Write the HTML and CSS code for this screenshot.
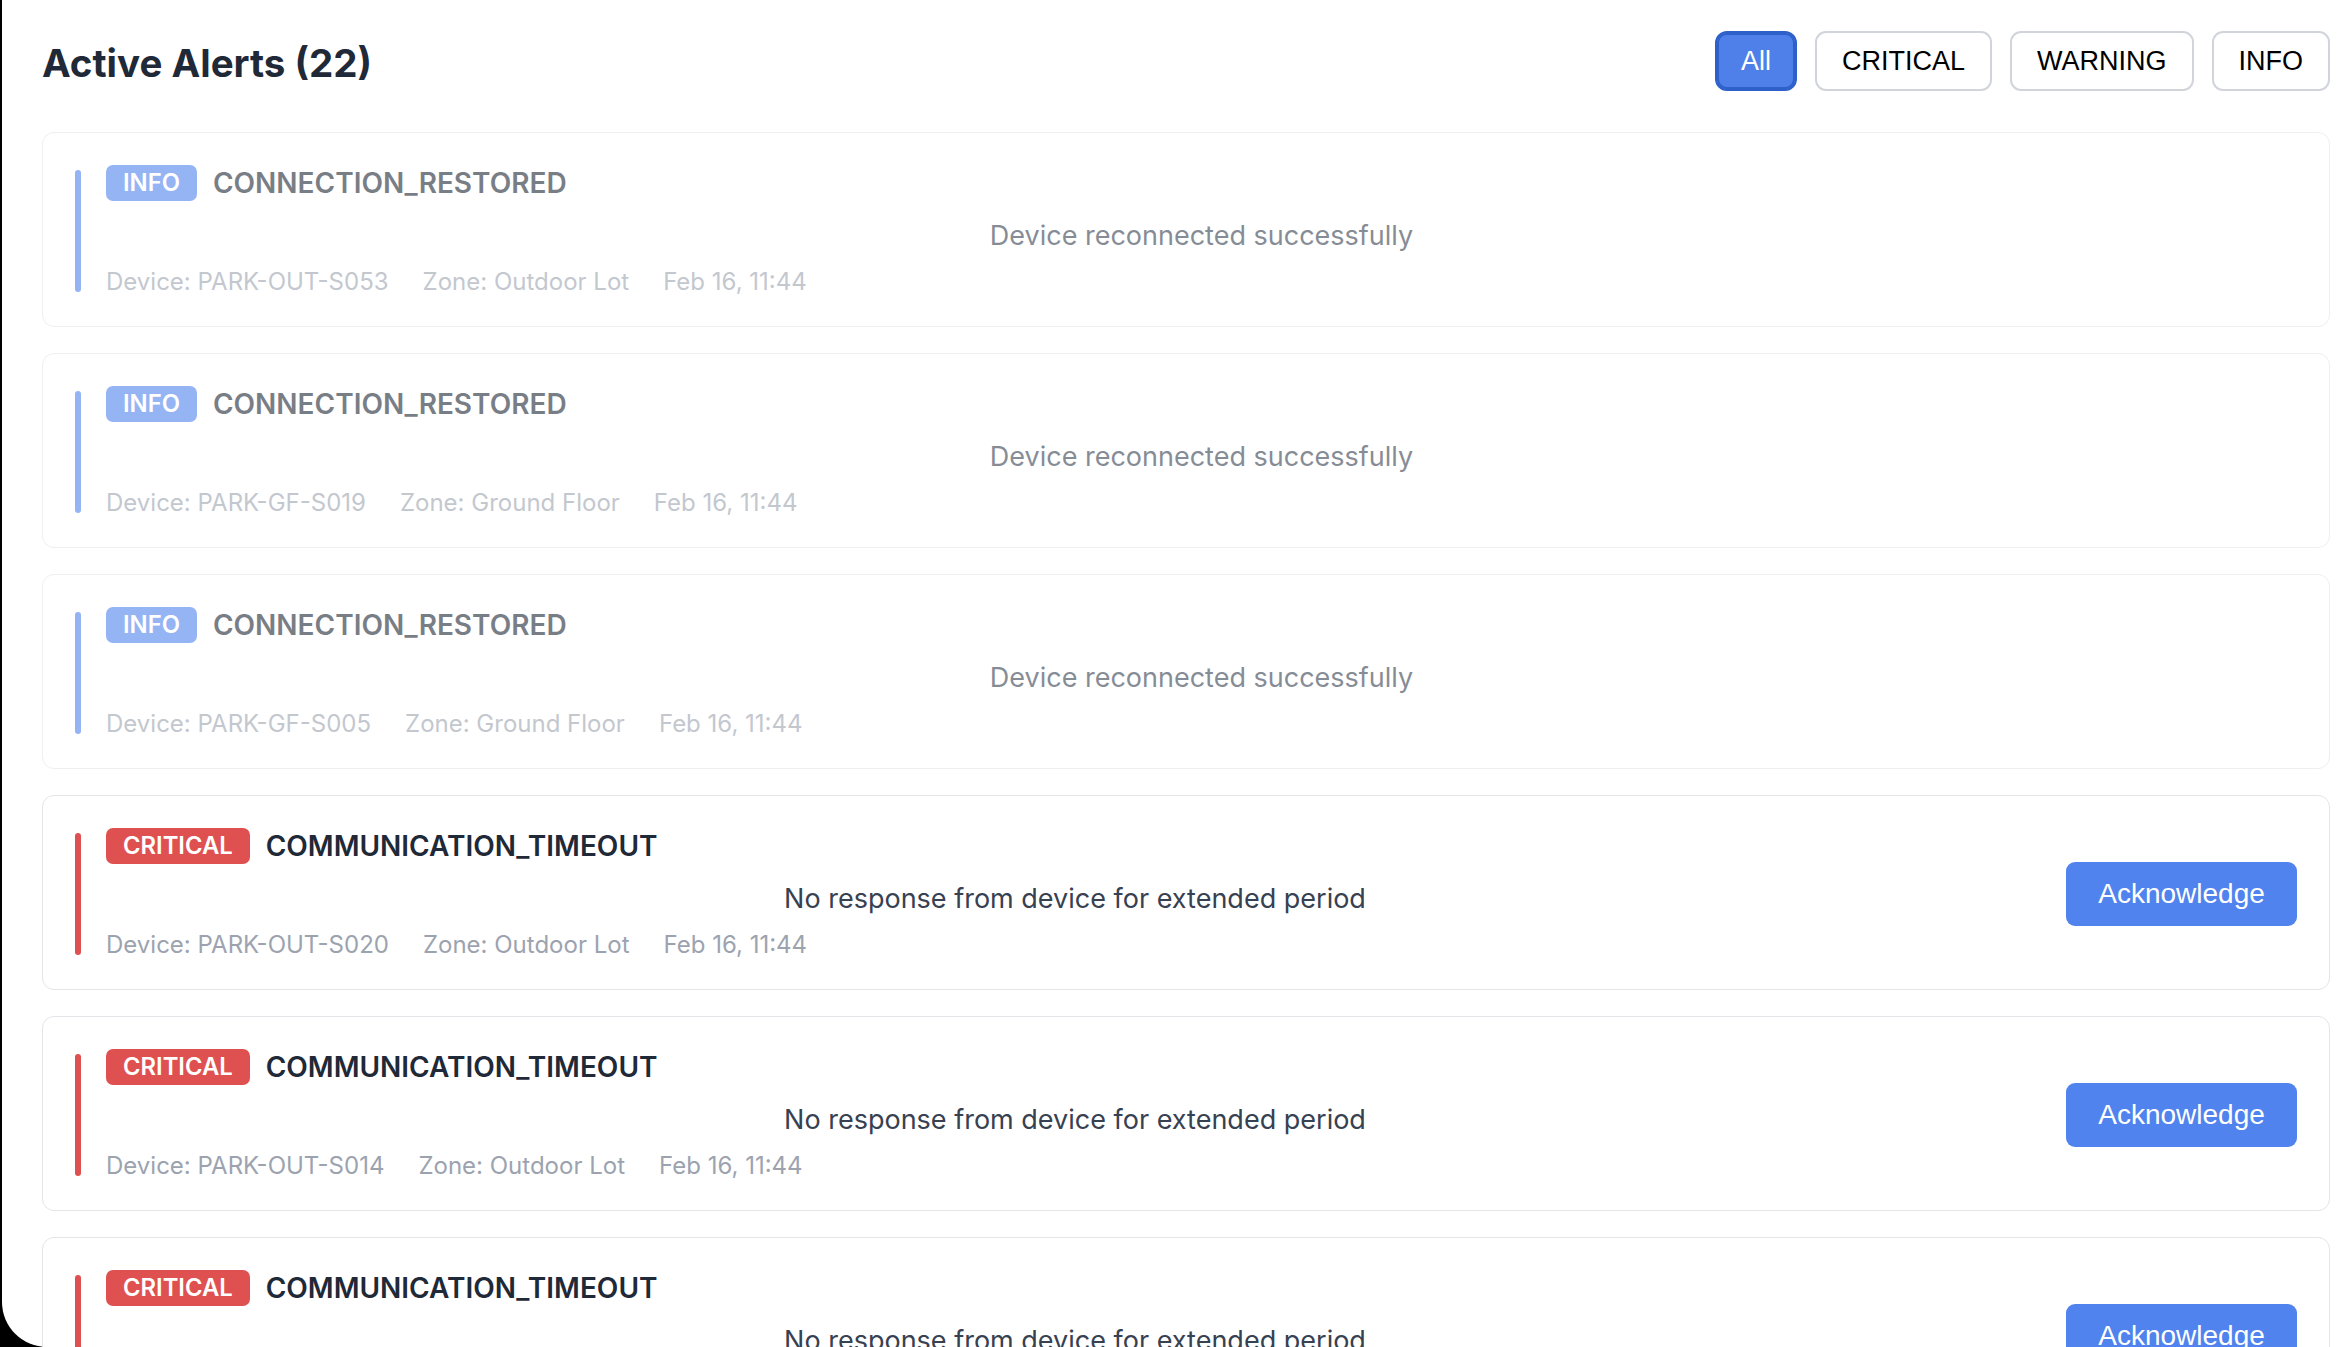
FILE: index.html
```html
<!DOCTYPE html>
<html lang="en">
<head>
<meta charset="utf-8">
<title>Active Alerts</title>
<link rel="stylesheet" href="styles.css">
</head>
<body>
<div class="window">
  <main class="alerts">
    <header class="alerts-header">
      <h1 class="alerts-title">Active Alerts (22)</h1>
      <div class="filters">
        <button class="filter filter-active">All</button>
        <button class="filter">CRITICAL</button>
        <button class="filter">WARNING</button>
        <button class="filter">INFO</button>
      </div>
    </header>

    <section class="alert-list">
      <article class="alert alert-info alert-muted">
        <div class="alert-bar"></div>
        <div class="alert-body">
          <div class="alert-head"><span class="badge badge-info">INFO</span><span class="alert-type">CONNECTION_RESTORED</span></div>
          <p class="alert-msg">Device reconnected successfully</p>
          <div class="alert-meta"><span>Device: PARK-OUT-S053</span><span>Zone: Outdoor Lot</span><span>Feb 16, 11:44</span></div>
        </div>
      </article>

      <article class="alert alert-info alert-muted">
        <div class="alert-bar"></div>
        <div class="alert-body">
          <div class="alert-head"><span class="badge badge-info">INFO</span><span class="alert-type">CONNECTION_RESTORED</span></div>
          <p class="alert-msg">Device reconnected successfully</p>
          <div class="alert-meta"><span>Device: PARK-GF-S019</span><span>Zone: Ground Floor</span><span>Feb 16, 11:44</span></div>
        </div>
      </article>

      <article class="alert alert-info alert-muted">
        <div class="alert-bar"></div>
        <div class="alert-body">
          <div class="alert-head"><span class="badge badge-info">INFO</span><span class="alert-type">CONNECTION_RESTORED</span></div>
          <p class="alert-msg">Device reconnected successfully</p>
          <div class="alert-meta"><span>Device: PARK-GF-S005</span><span>Zone: Ground Floor</span><span>Feb 16, 11:44</span></div>
        </div>
      </article>

      <article class="alert alert-critical">
        <div class="alert-bar"></div>
        <div class="alert-body">
          <div class="alert-head"><span class="badge badge-critical">CRITICAL</span><span class="alert-type">COMMUNICATION_TIMEOUT</span></div>
          <p class="alert-msg">No response from device for extended period</p>
          <div class="alert-meta"><span>Device: PARK-OUT-S020</span><span>Zone: Outdoor Lot</span><span>Feb 16, 11:44</span></div>
        </div>
        <button class="ack">Acknowledge</button>
      </article>

      <article class="alert alert-critical">
        <div class="alert-bar"></div>
        <div class="alert-body">
          <div class="alert-head"><span class="badge badge-critical">CRITICAL</span><span class="alert-type">COMMUNICATION_TIMEOUT</span></div>
          <p class="alert-msg">No response from device for extended period</p>
          <div class="alert-meta"><span>Device: PARK-OUT-S014</span><span>Zone: Outdoor Lot</span><span>Feb 16, 11:44</span></div>
        </div>
        <button class="ack">Acknowledge</button>
      </article>

      <article class="alert alert-critical">
        <div class="alert-bar"></div>
        <div class="alert-body">
          <div class="alert-head"><span class="badge badge-critical">CRITICAL</span><span class="alert-type">COMMUNICATION_TIMEOUT</span></div>
          <p class="alert-msg">No response from device for extended period</p>
          <div class="alert-meta"><span>Device: PARK-GF-S011</span><span>Zone: Ground Floor</span><span>Feb 16, 11:44</span></div>
        </div>
        <button class="ack">Acknowledge</button>
      </article>
    </section>
  </main>
</div>
</body>
</html>
```

FILE: styles.css
```css
* { box-sizing: border-box; }

html, body {
  margin: 0;
  padding: 0;
  height: 100%;
  background: #000;
  overflow: hidden;
}

.window {
  margin-left: 2px;
  height: 1347px;
  background: #fff;
  border-bottom-left-radius: 45px;
  overflow: hidden;
  font-family: Inter, "Noto Sans", sans-serif;
}

.alerts {
  padding: 31px 22px 0 40px;
}

.alerts-header {
  display: flex;
  align-items: center;
  justify-content: space-between;
  height: 60px;
  margin-bottom: 41px;
}

.alerts-title {
  margin: 4px 0 0 0;
  font-size: 38.5px;
  font-weight: 700;
  color: #1f2937;
  line-height: 46px;
}

.filters {
  display: flex;
  gap: 18px;
}

.filter {
  height: 60px;
  padding: 0 25px;
  border: 2px solid #d1d5db;
  border-radius: 11px;
  background: #fff;
  color: #000;
  font-family: "Liberation Sans", Arial, sans-serif;
  font-size: 27px;
  line-height: 32px;
}

.filter-active {
  background: #4f80ea;
  border-color: #2d60c8;
  box-shadow: inset 0 0 0 2px #2d60c8;
  color: #fff;
  padding: 0 24px;
  border-radius: 12px;
}

.alert-list {
  display: flex;
  flex-direction: column;
  gap: 26px;
}

.alert {
  display: flex;
  align-items: center;
  height: 195px;
  border: 1px solid #e3e5e9;
  border-radius: 12px;
  background: #fff;
  padding: 32px 32px 29px 32px;
}

.alert-muted {
  opacity: 0.6;
}

.alert-bar {
  align-self: stretch;
  width: 6px;
  margin: 5px 25px 5px 0;
  border-radius: 3px;
  flex: none;
}

.alert-info .alert-bar { background: #5083ed; }
.alert-critical .alert-bar { background: #df5150; }

.alert-body {
  flex: 1;
  min-width: 0;
  align-self: flex-start;
}

.alert-head {
  display: flex;
  align-items: center;
  gap: 16px;
  height: 36px;
}

.badge {
  height: 36px;
  line-height: 36px;
  padding: 0 17px;
  border-radius: 7px;
  color: #fff;
  font-size: 23.8px;
  font-weight: 600;
}

.badge-info { background: #5083ed; }
.badge-critical { background: #df5150; }

.alert-type {
  font-size: 28px;
  font-weight: 600;
  color: #1f2937;
  line-height: 36px;
}

.alert-msg {
  margin: 16.5px 0 0 0;
  text-align: center;
  font-size: 27px;
  line-height: 36px;
  color: #374151;
}

.alert-meta {
  display: flex;
  gap: 34px;
  margin-top: 13px;
  font-size: 24px;
  line-height: 30px;
  color: #9ca3af;
}

.ack {
  flex: none;
  margin-left: 22px;
  width: 231px;
  height: 64px;
  border: none;
  border-radius: 9px;
  background: #5083ed;
  color: #fff;
  font-family: "Liberation Sans", Arial, sans-serif;
  font-size: 28px;
}
```
